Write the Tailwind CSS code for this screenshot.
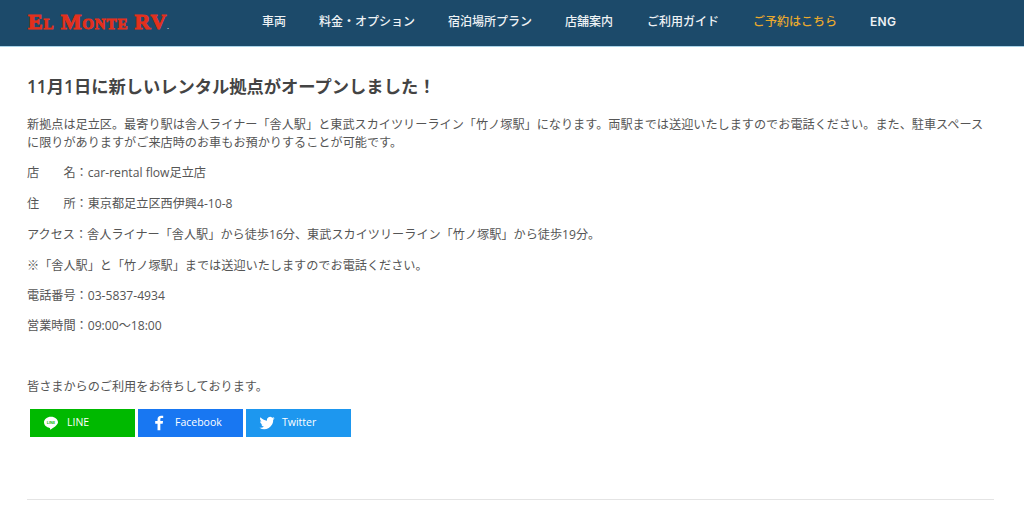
<!DOCTYPE html>
<html lang="ja">
<head>
    <meta charset="UTF-8">
    <meta name="viewport" content="width=device-width, initial-scale=1.0">
    <title>新しいレンタル拠点</title>
    <script src="https://cdn.jsdelivr.net/npm/@tailwindcss/browser@4"></script>
</head>
<body class="bg-white font-['Open_Sans','Noto_Sans_CJK_JP',sans-serif] text-[#444] overflow-hidden">
    <header class="h-[47px] bg-[#1c4a6a] border-b border-[#a9d3e8] flex items-center">
        <a class="ml-[28px] w-[234px] text-[#e3301c] font-['Liberation_Serif',serif] font-black text-[22px] tracking-[0.85px] [font-variant:small-caps] [-webkit-text-stroke:1px_#e3301c] leading-none whitespace-nowrap -mt-[3px]">El Monte RV<span class="text-white text-[6px] [-webkit-text-stroke:0]">.</span></a>
        <nav class="flex items-center text-[12px] font-medium text-[#eef2f5] font-['Inter','Noto_Sans_CJK_JP',sans-serif] -mt-[3px] whitespace-nowrap">
            <a class="w-[57px]">車両</a>
            <a class="w-[129px]">料金・オプション</a>
            <a class="w-[117px]">宿泊場所プラン</a>
            <a class="w-[82px]">店舗案内</a>
            <a class="w-[106px]">ご利用ガイド</a>
            <a class="w-[117px] text-[#e9a92e]">ご予約はこちら</a>
            <a class="font-semibold tracking-[0.3px]">ENG</a>
        </nav>
    </header>

    <main class="pl-[27px] pr-[30px] pt-[28px]">
        <h1 class="text-[17.28px] leading-[24px] font-semibold text-[#444]">11月1日に新しいレンタル拠点がオープンしました！</h1>
        <div class="mt-[17px] text-[12.15px] leading-[18px] text-[#555]">
            <p>新拠点は足立区。最寄り駅は舎人ライナー「舎人駅」と東武スカイツリーライン「竹ノ塚駅」になります。両駅までは送迎いたしますのでお電話ください。また、駐車スペースに限りがありますがご来店時のお車もお預かりすることが可能です。</p>
            <p class="mt-[12px]">店　　名：car-rental flow足立店</p>
            <p class="mt-[13px]">住　　所：東京都足立区西伊興4-10-8</p>
            <p class="mt-[13px]">アクセス：舎人ライナー「舎人駅」から徒歩16分、東武スカイツリーライン「竹ノ塚駅」から徒歩19分。</p>
            <p class="mt-[13px]">※「舎人駅」と「竹ノ塚駅」までは送迎いたしますのでお電話ください。</p>
            <p class="mt-[12px]">電話番号：03-5837-4934</p>
            <p class="mt-[12px]">営業時間：09:00～18:00</p>
            <p class="mt-[43px]">皆さまからのご利用をお待ちしております。</p>
        </div>

        <div class="flex gap-[3px] mt-[13px] ml-[3px] text-white text-[10.5px]">
            <a class="w-[105px] h-[28px] bg-[#00b900] flex items-center pl-[13px] gap-[8px]">
                <svg class="w-[16px] h-[16px]" viewBox="0 0 24 24"><path fill="#fff" d="M12 2.500C6 2.500 1.500 6.300 1.500 11c0 4.200 3.600 7.700 8.500 8.400.6.100.8.500.6 1.200-.1.600-.2 1.600 1 1 2.500-1.300 6.400-3.800 8.400-6.100 1.400-1.500 2.500-2.900 2.500-4.500 0-4.700-4.500-8.500-10.500-8.500z"/><text x="12" y="13.500" text-anchor="middle" font-size="5.500" font-weight="700" fill="#00b900">LINE</text></svg>
                <span>LINE</span>
            </a>
            <a class="w-[105px] h-[28px] bg-[#1877f2] flex items-center pl-[13px] gap-[8px]">
                <svg class="w-[16px] h-[16px]" viewBox="0 0 24 24"><path fill="#fff" d="M14 23v-10h3.500l.6-4H14V6.600c0-1.200.4-2 2.100-2h2.200V1.100C17.900 1 16.600 1 15.200 1 12 1 9.800 2.900 9.800 6.200V9H6.300v4h3.500v10z"/></svg>
                <span>Facebook</span>
            </a>
            <a class="w-[105px] h-[28px] bg-[#1d97ef] flex items-center pl-[13px] gap-[7px]">
                <svg class="w-[16px] h-[16px]" viewBox="0 0 24 24"><path fill="#fff" d="M23.500 4.900c-.8.400-1.800.6-2.700.8 1-.6 1.700-1.500 2.100-2.600-.9.500-1.900.9-3 1.100a4.700 4.700 0 0 0-8 4.300C8 8.300 4.500 6.400 2.200 3.500c-1.200 2.100-.6 4.900 1.500 6.300-.8 0-1.500-.2-2.100-.6 0 2.300 1.600 4.300 3.800 4.800-.7.200-1.400.2-2.100.1.600 1.900 2.400 3.200 4.400 3.300A9.500 9.500 0 0 1 .7 19.100a13.400 13.400 0 0 0 20.600-11.900c.9-.6 1.700-1.400 2.200-2.300z"/></svg>
                <span>Twitter</span>
            </a>
        </div>

        <hr class="mt-[62px] border-t border-[#e4e4e4]">
    </main>
</body>
</html>
